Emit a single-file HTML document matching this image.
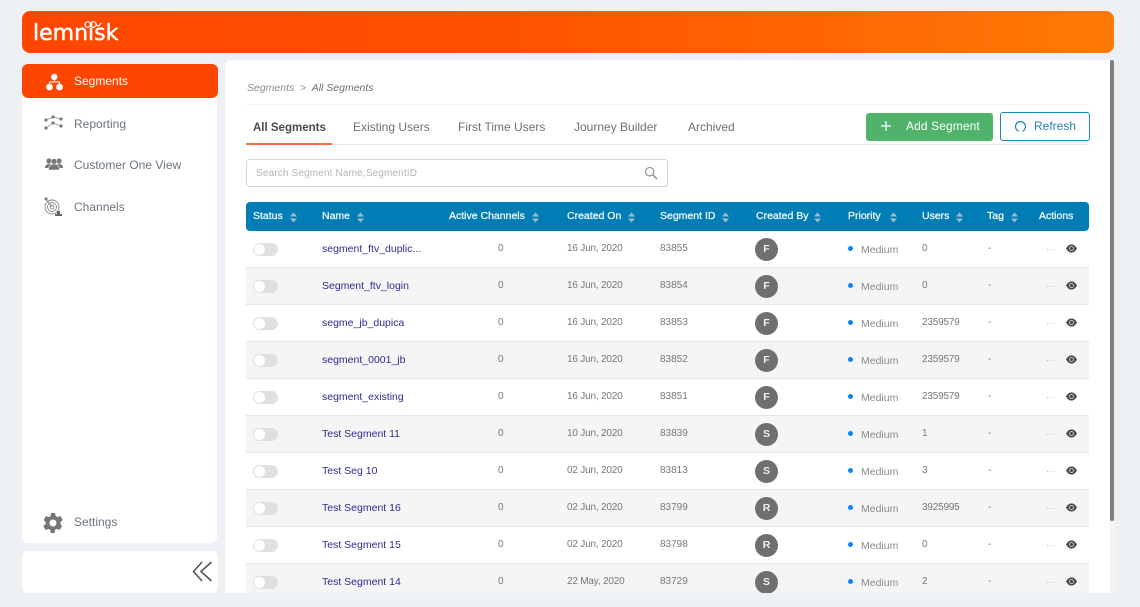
<!DOCTYPE html>
<html><head><meta charset="utf-8"><style>
*{box-sizing:border-box}
html,body{margin:0;padding:0;width:1140px;height:607px;overflow:hidden;background:#edf0f5;font-family:"Liberation Sans",sans-serif;font-size:11.5px;color:#777}
.a{position:absolute;white-space:nowrap}
#hd{left:22px;top:11px;width:1092px;height:42px;border-radius:8px;background:linear-gradient(90deg,#ff4600 0%,#ff5200 45%,#ff7a05 100%)}
#sb{left:22px;top:64px;width:195px;height:479px;background:#fff;border-radius:6px}
#act{left:22px;top:64px;width:196px;height:34px;background:#ff4600;border-radius:6px}
#col{left:22px;top:551px;width:196px;height:42px;background:#fff;border-radius:6px}
#mn{left:225px;top:60px;width:885px;height:533px;background:#fff;border-radius:6px 0 0 0;overflow:hidden}
.nav{left:74px;font-size:12px;color:#6b7480;line-height:16px}
.tab{top:120px;font-size:12px;color:#707070;line-height:15px}
.th{top:209px;color:#eef6fa;font-size:10.5px;line-height:14px;-webkit-text-stroke:.3px #eef6fa}
.r{position:absolute;left:246px;width:843px;height:37px;border-bottom:1px solid #e6e6e6}
.r.g{background:#f5f5f5}
.r .a{line-height:14px;font-size:10px;letter-spacing:-.2px;top:11px;color:#777}
.r .a.n{left:76px;color:#2c2c92;font-size:10.5px;letter-spacing:0}
.r .a.t{left:7px;top:12px;width:25px;height:13px;border-radius:7px;background:#e0e0e0}
.r .t:before{content:"";position:absolute;left:1px;top:1px;width:11px;height:11px;border-radius:50%;background:#fff}
.r .c0{left:252px}
.r .c1{left:321px}
.r .a.c2{left:414px;letter-spacing:0}
.r .a.av{left:509px;top:7px;width:23px;height:23px;border-radius:50%;background:#6f6f6f;color:#f0f0f0;text-align:center;line-height:23px;font-weight:bold;font-size:10.5px;letter-spacing:0}
.r .a.d{left:602px;top:15px;width:5px;height:5px;border-radius:50%;background:#0a84ff}
.r .a.m{left:615px;top:12px;color:#8a8a8a;font-size:10.5px;letter-spacing:0}
.r .u{left:676px}
.r .ta{left:742px}
.r .a.dt{left:800px;top:11px;color:#b5b5b5;font-size:9px;letter-spacing:.4px}
.r svg{position:absolute;left:820px;top:13px}
</style></head><body>
<div class="a" id="hd"></div>
<div class="a" style="left:33px;top:17px;font-size:22px;line-height:34px;color:#fff;font-family:'DejaVu Sans',sans-serif;-webkit-text-stroke:.5px #fff">lemnisk</div>
<svg class="a" style="left:84px;top:20px" width="21" height="9" viewBox="0 0 21 9"><path d="M1 4.500a2.800 2.800 0 0 1 5.600 0 2.800 2.800 0 0 1-5.600 0M6.600 4.500a2.800 2.800 0 0 1 5.600 0 2.800 2.800 0 0 1-5.600 0M12.200 4.500q2 2.500 3.500.5l1.500-2" fill="none" stroke="#fff" stroke-width="1.200"/></svg>

<div class="a" id="sb"></div>
<div class="a" id="act"></div>
<svg class="a" style="left:45px;top:73px" width="19" height="18" viewBox="0 0 19 18"><g fill="#fff"><circle cx="9.300" cy="4" r="3.200"/><circle cx="4.500" cy="14" r="3.400"/><circle cx="14.500" cy="14" r="3.400"/></g><path d="M9.300 6v3M4.500 11V9h10v2" fill="none" stroke="#fff"/></svg>
<div class="a nav" style="top:73px;color:#fff">Segments</div>

<svg class="a" style="left:44px;top:115px" width="20" height="16" viewBox="0 0 20 16"><g fill="#777"><circle cx="2" cy="5" r="1.600"/><circle cx="9" cy="2" r="1.600"/><circle cx="17" cy="4" r="1.600"/><circle cx="2" cy="13" r="1.600"/><circle cx="9" cy="8" r="1.600"/><circle cx="17" cy="11" r="1.600"/></g><path d="M2 5l7-3 8 2M2 13l7-5 8 3" fill="none" stroke="#888" stroke-width=".7"/></svg>
<div class="a nav" style="top:116px">Reporting</div>

<svg class="a" style="left:45px;top:157px" width="18" height="14" viewBox="0 0 18 14"><g fill="#777"><circle cx="4" cy="4" r="2.600"/><circle cx="14" cy="4" r="2.600"/><path d="M0 11q0-4 4-4t4 4zM10 11q0-4 4-4t4 4z"/><circle cx="9" cy="4.500" r="3" stroke="#fff" stroke-width=".6"/><path d="M3.500 13q0-6 5.500-6t5.500 6z" stroke="#fff" stroke-width=".6"/></g></svg>
<div class="a nav" style="top:157px">Customer One View</div>

<svg class="a" style="left:44px;top:197px" width="20" height="20" viewBox="0 0 20 20"><g fill="none" stroke="#888" stroke-width=".9"><circle cx="8" cy="10" r="7"/><circle cx="8" cy="10" r="4.500"/><circle cx="8" cy="10" r="2"/><path d="M1 1l7 9"/></g><circle cx="2" cy="2" r="1.500" fill="#777"/><path d="M11 19v-2h2v-3h3v3h2v2z" fill="#666"/></svg>
<div class="a nav" style="top:199px">Channels</div>

<svg class="a" style="left:43px;top:513px" width="20" height="20" viewBox="2 2 20 20"><path fill="#757575" d="M19.400 13c.1-.3.1-.7.1-1s0-.7-.1-1l2.100-1.600c.2-.2.2-.4.1-.6l-2-3.500c-.1-.2-.4-.3-.6-.2l-2.500 1c-.5-.4-1.100-.7-1.700-1L14 2.400c0-.2-.2-.4-.5-.4h-3c-.3 0-.5.2-.5.4l-.4 2.700c-.6.300-1.200.6-1.700 1l-2.500-1c-.2-.1-.5 0-.6.200l-2 3.500c-.1.200-.1.400.1.600L4.600 11c-.1.300-.1.700-.1 1s0 .7.1 1l-2.100 1.600c-.2.2-.2.4-.1.600l2 3.500c.1.2.4.3.6.2l2.500-1c.5.4 1.100.7 1.700 1l.4 2.700c0 .2.2.4.500.4h3c.3 0 .5-.2.500-.4l.4-2.700c.6-.3 1.200-.6 1.700-1l2.500 1c.2.100.5 0 .6-.2l2-3.500c.1-.2.1-.4-.1-.6zM12 15.500a3.500 3.500 0 1 1 0-7 3.500 3.500 0 0 1 0 7z"/></svg>
<div class="a nav" style="top:514px">Settings</div>

<div class="a" id="col"></div>
<svg class="a" style="left:192px;top:561px" width="21" height="21" viewBox="0 0 21 21"><path d="M10 1L1.500 10.500 10 20M19.500 1L9 10.500 19.500 20" fill="none" stroke="#555" stroke-width="1.600"/></svg>

<div class="a" id="mn"></div>
<div class="a" style="left:1110px;top:60px;width:4px;height:533px;background:#f3f3f3"></div>
<div class="a" style="left:1110px;top:60px;width:4px;height:461px;background:#808080;border-radius:2px"></div>

<div class="a" style="left:247px;top:81px;font-size:10.500px;font-style:italic;line-height:14px;color:#8c8c8c">Segments &nbsp;&gt;&nbsp; <span style="color:#6e6e6e">All Segments</span></div>
<div class="a" style="left:246px;top:104px;width:843px;height:1px;background:#f2f2f2"></div>

<div class="a tab" style="left:253px;top:121px;font-weight:bold;color:#4a4a4a;font-size:11.500px">All Segments</div>
<div class="a tab" style="left:353px">Existing Users</div>
<div class="a tab" style="left:458px">First Time Users</div>
<div class="a tab" style="left:574px">Journey Builder</div>
<div class="a tab" style="left:688px">Archived</div>
<div class="a" style="left:246px;top:144px;width:843px;height:1px;background:#e8e8e8"></div>
<div class="a" style="left:246px;top:143px;width:86px;height:2px;background:#ff6a3d"></div>

<div class="a" style="left:866px;top:113px;width:127px;height:28px;background:#50b36c;border-radius:3px"></div>
<svg class="a" style="left:880px;top:120px" width="12" height="12" viewBox="0 0 12 12"><path d="M6 1v10M1 6h10" stroke="#fff" stroke-width="1.300"/></svg>
<div class="a" style="left:906px;top:119px;color:#fff;font-size:12px;letter-spacing:.1px;line-height:15px">Add Segment</div>
<div class="a" style="left:1000px;top:112px;width:90px;height:29px;border:1px solid #1a86b5;border-radius:3px;background:#fff"></div>
<svg class="a" style="left:1014px;top:120px" width="13" height="13" viewBox="0 0 13 13"><path d="M4.500 11.200A5 5 0 1 1 8.500 11.200" fill="none" stroke="#1a80ad" stroke-width="1.200"/></svg>
<div class="a" style="left:1034px;top:119px;color:#2a82ad;font-size:12px;line-height:15px">Refresh</div>

<div class="a" style="left:246px;top:159px;width:422px;height:28px;border:1px solid #d5d5d5;border-radius:3px;background:#fff"></div>
<div class="a" style="left:256px;top:167px;font-size:10px;color:#b4b4b4;line-height:14px;letter-spacing:.15px">Search Segment Name,SegmentID</div>
<svg class="a" style="left:644px;top:166px" width="14" height="14" viewBox="0 0 14 14"><circle cx="5.700" cy="5.700" r="4.200" fill="none" stroke="#8a8a8a" stroke-width="1.100"/><path d="M9 9l4 4" stroke="#8a8a8a" stroke-width="1.400"/></svg>

<div class="a" style="left:246px;top:202px;width:843px;height:29px;background:#007db4;border-radius:4px"></div>
<div class="a th" style="left:253px">Status</div>
<div class="a th" style="left:322px">Name</div>
<div class="a th" style="left:449px">Active Channels</div>
<div class="a th" style="left:567px">Created On</div>
<div class="a th" style="left:660px">Segment ID</div>
<div class="a th" style="left:756px">Created By</div>
<div class="a th" style="left:848px">Priority</div>
<div class="a th" style="left:922px">Users</div>
<div class="a th" style="left:987px">Tag</div>
<div class="a th" style="left:1039px">Actions</div>
<svg class="a" style="left:246px;top:202px" width="843" height="29" fill="#9fbccb">
<path d="M44 14.500l3.500-4 3.500 4zM44 16.500l3.500 4 3.500-4zM111 14.500l3.500-4 3.500 4zM111 16.500l3.500 4 3.500-4zM286 14.500l3.500-4 3.500 4zM286 16.500l3.500 4 3.500-4zM382 14.500l3.500-4 3.500 4zM382 16.500l3.500 4 3.500-4zM476 14.500l3.500-4 3.500 4zM476 16.500l3.500 4 3.500-4zM568 14.500l3.500-4 3.500 4zM568 16.500l3.500 4 3.500-4zM644 14.500l3.500-4 3.500 4zM644 16.500l3.500 4 3.500-4zM710 14.500l3.500-4 3.500 4zM710 16.500l3.500 4 3.500-4zM765 14.500l3.500-4 3.500 4zM765 16.500l3.500 4 3.500-4z"/>
</svg>

<svg width="0" height="0" style="position:absolute"><defs><g id="e"><path d="M0 4.500C2 1.200 3.500 .5 5.500 .5S9 1.200 11 4.500C9 7.800 7.500 8.500 5.500 8.500S2 7.800 0 4.500z" fill="#4a4a4a"/><circle cx="5.500" cy="4.500" r="2.400" fill="#ddd"/><circle cx="5.500" cy="4.500" r="1.600" fill="#4a4a4a"/></g></defs></svg>

<div class="r" style="top:231px"><div class="t a"></div><div class="a n">segment_ftv_duplic...</div><div class="a c0">0</div><div class="a c1">16 Jun, 2020</div><div class="a c2">83855</div><div class="a av">F</div><div class="a d"></div><div class="a m">Medium</div><div class="a u">0</div><div class="a ta">-</div><div class="a dt">···</div><svg width="11" height="9"><use href="#e"/></svg></div>
<div class="r g" style="top:268px"><div class="t a"></div><div class="a n">Segment_ftv_login</div><div class="a c0">0</div><div class="a c1">16 Jun, 2020</div><div class="a c2">83854</div><div class="a av">F</div><div class="a d"></div><div class="a m">Medium</div><div class="a u">0</div><div class="a ta">-</div><div class="a dt">···</div><svg width="11" height="9"><use href="#e"/></svg></div>
<div class="r" style="top:305px"><div class="t a"></div><div class="a n">segme_jb_dupica</div><div class="a c0">0</div><div class="a c1">16 Jun, 2020</div><div class="a c2">83853</div><div class="a av">F</div><div class="a d"></div><div class="a m">Medium</div><div class="a u">2359579</div><div class="a ta">-</div><div class="a dt">···</div><svg width="11" height="9"><use href="#e"/></svg></div>
<div class="r g" style="top:342px"><div class="t a"></div><div class="a n">segment_0001_jb</div><div class="a c0">0</div><div class="a c1">16 Jun, 2020</div><div class="a c2">83852</div><div class="a av">F</div><div class="a d"></div><div class="a m">Medium</div><div class="a u">2359579</div><div class="a ta">-</div><div class="a dt">···</div><svg width="11" height="9"><use href="#e"/></svg></div>
<div class="r" style="top:379px"><div class="t a"></div><div class="a n">segment_existing</div><div class="a c0">0</div><div class="a c1">16 Jun, 2020</div><div class="a c2">83851</div><div class="a av">F</div><div class="a d"></div><div class="a m">Medium</div><div class="a u">2359579</div><div class="a ta">-</div><div class="a dt">···</div><svg width="11" height="9"><use href="#e"/></svg></div>
<div class="r g" style="top:416px"><div class="t a"></div><div class="a n">Test Segment 11</div><div class="a c0">0</div><div class="a c1">10 Jun, 2020</div><div class="a c2">83839</div><div class="a av">S</div><div class="a d"></div><div class="a m">Medium</div><div class="a u">1</div><div class="a ta">-</div><div class="a dt">···</div><svg width="11" height="9"><use href="#e"/></svg></div>
<div class="r" style="top:453px"><div class="t a"></div><div class="a n">Test Seg 10</div><div class="a c0">0</div><div class="a c1">02 Jun, 2020</div><div class="a c2">83813</div><div class="a av">S</div><div class="a d"></div><div class="a m">Medium</div><div class="a u">3</div><div class="a ta">-</div><div class="a dt">···</div><svg width="11" height="9"><use href="#e"/></svg></div>
<div class="r g" style="top:490px"><div class="t a"></div><div class="a n">Test Segment 16</div><div class="a c0">0</div><div class="a c1">02 Jun, 2020</div><div class="a c2">83799</div><div class="a av">R</div><div class="a d"></div><div class="a m">Medium</div><div class="a u">3925995</div><div class="a ta">-</div><div class="a dt">···</div><svg width="11" height="9"><use href="#e"/></svg></div>
<div class="r" style="top:527px"><div class="t a"></div><div class="a n">Test Segment 15</div><div class="a c0">0</div><div class="a c1">02 Jun, 2020</div><div class="a c2">83798</div><div class="a av">R</div><div class="a d"></div><div class="a m">Medium</div><div class="a u">0</div><div class="a ta">-</div><div class="a dt">···</div><svg width="11" height="9"><use href="#e"/></svg></div>
<div class="r g" style="top:564px;height:29px;border-bottom:0;overflow:hidden"><div class="t a"></div><div class="a n">Test Segment 14</div><div class="a c0">0</div><div class="a c1">22 May, 2020</div><div class="a c2">83729</div><div class="a av">S</div><div class="a d"></div><div class="a m">Medium</div><div class="a u">2</div><div class="a ta">-</div><div class="a dt">···</div><svg width="11" height="9"><use href="#e"/></svg></div>
</body></html>
